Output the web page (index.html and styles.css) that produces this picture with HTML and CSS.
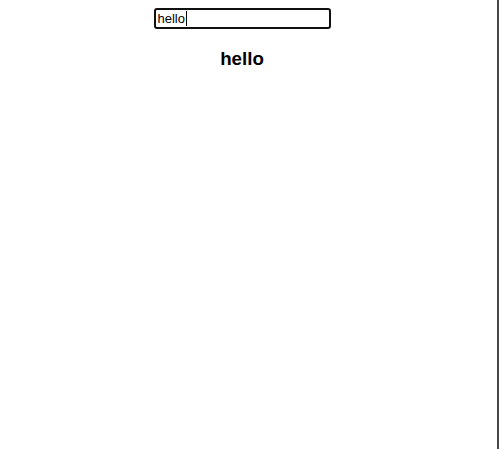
FILE: index.html
```html
<!DOCTYPE html>
<html>
<head>
<meta charset="utf-8">
<link rel="stylesheet" href="styles.css">
</head>
<body>
<div class="frame">
  <main class="app">
    <div class="field"><span class="value">hello</span><span class="caret"></span></div>
    <h3 class="echo">hello</h3>
  </main>
</div>
</body>
</html>
```

FILE: styles.css
```css
html, body {
  margin: 0;
  padding: 0;
  background: #fff;
  overflow: hidden;
}
.frame {
  width: 497px;
  height: 449px;
  border-right: 2px solid #464646;
  box-sizing: content-box;
}
.app {
  width: 484px;
  padding-top: 8px;
  display: flex;
  flex-direction: column;
  align-items: center;
  font-family: "Liberation Sans", Arial, sans-serif;
}
.field {
  width: 177px;
  height: 21px;
  box-sizing: border-box;
  border: 2px solid #101010;
  border-radius: 3px;
  padding: 0 2px;
  display: flex;
  align-items: center;
  font-size: 13px;
  color: #000;
}
.caret {
  width: 1px;
  height: 15px;
  background: #000;
  margin-left: 1px;
}
.echo {
  margin: 19px 0 0;
  font-size: 18.72px;
  font-weight: bold;
  line-height: 22px;
  color: #000;
}
```
